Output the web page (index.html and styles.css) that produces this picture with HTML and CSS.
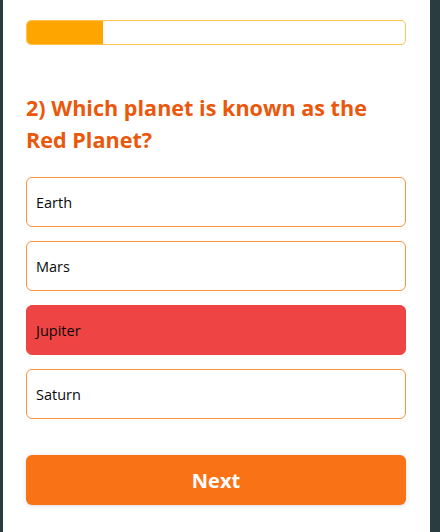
FILE: index.html
```html
<!DOCTYPE html>
<html lang="en">
<head>
<meta charset="utf-8">
<title>Quiz</title>
<link rel="stylesheet" href="styles.css">
</head>
<body>
<main class="card">
  <div class="progress"><div class="progress-fill" style="width: 20%"></div></div>
  <h2 class="question">2) Which planet is known as the Red Planet?</h2>
  <div class="options">
    <button class="option">Earth</button>
    <button class="option">Mars</button>
    <button class="option option-wrong">Jupiter</button>
    <button class="option">Saturn</button>
  </div>
  <button class="next">Next</button>
</main>
</body>
</html>
```
FILE: styles.css
```css
html, body {
  margin: 0;
  padding: 0;
  height: 100%;
}
body {
  background: #2b3c40;
  font-family: "Open Sans", "Noto Sans", sans-serif;
}
.card {
  box-sizing: border-box;
  margin-left: 3px;
  width: 427px;
  min-height: 100%;
  background: #ffffff;
  padding: 20px 24px 0 23px;
}
.progress {
  height: 25px;
  box-sizing: border-box;
  border: 1px solid #ffc24f;
  border-radius: 5px;
  overflow: hidden;
}
.progress-fill {
  height: 100%;
  background: #ffa500;
}
.question {
  margin: 47px 0 0;
  padding-right: 20px;
  font-size: 21.6px;
  line-height: 32px;
  font-weight: 700;
  color: #ea580c;
}
.options {
  margin-top: 21px;
  display: flex;
  flex-direction: column;
  gap: 14px;
}
.option {
  box-sizing: border-box;
  height: 50px;
  text-align: left;
  padding: 0 9px;
  border: 1px solid #fb923c;
  border-radius: 6px;
  background: #ffffff;
  font-family: inherit;
  font-size: 14.5px;
  color: #0a0a0a;
}
.option-wrong {
  background: #ef4444;
  border-color: #ef4444;
}
.next {
  display: block;
  width: 100%;
  margin-top: 36px;
  height: 50px;
  border: none;
  border-radius: 6px;
  background: #f97316;
  color: #ffffff;
  font-family: inherit;
  font-size: 20px;
  font-weight: 700;
  box-shadow: 0 1px 4px rgba(0,0,0,0.15);
}
```
